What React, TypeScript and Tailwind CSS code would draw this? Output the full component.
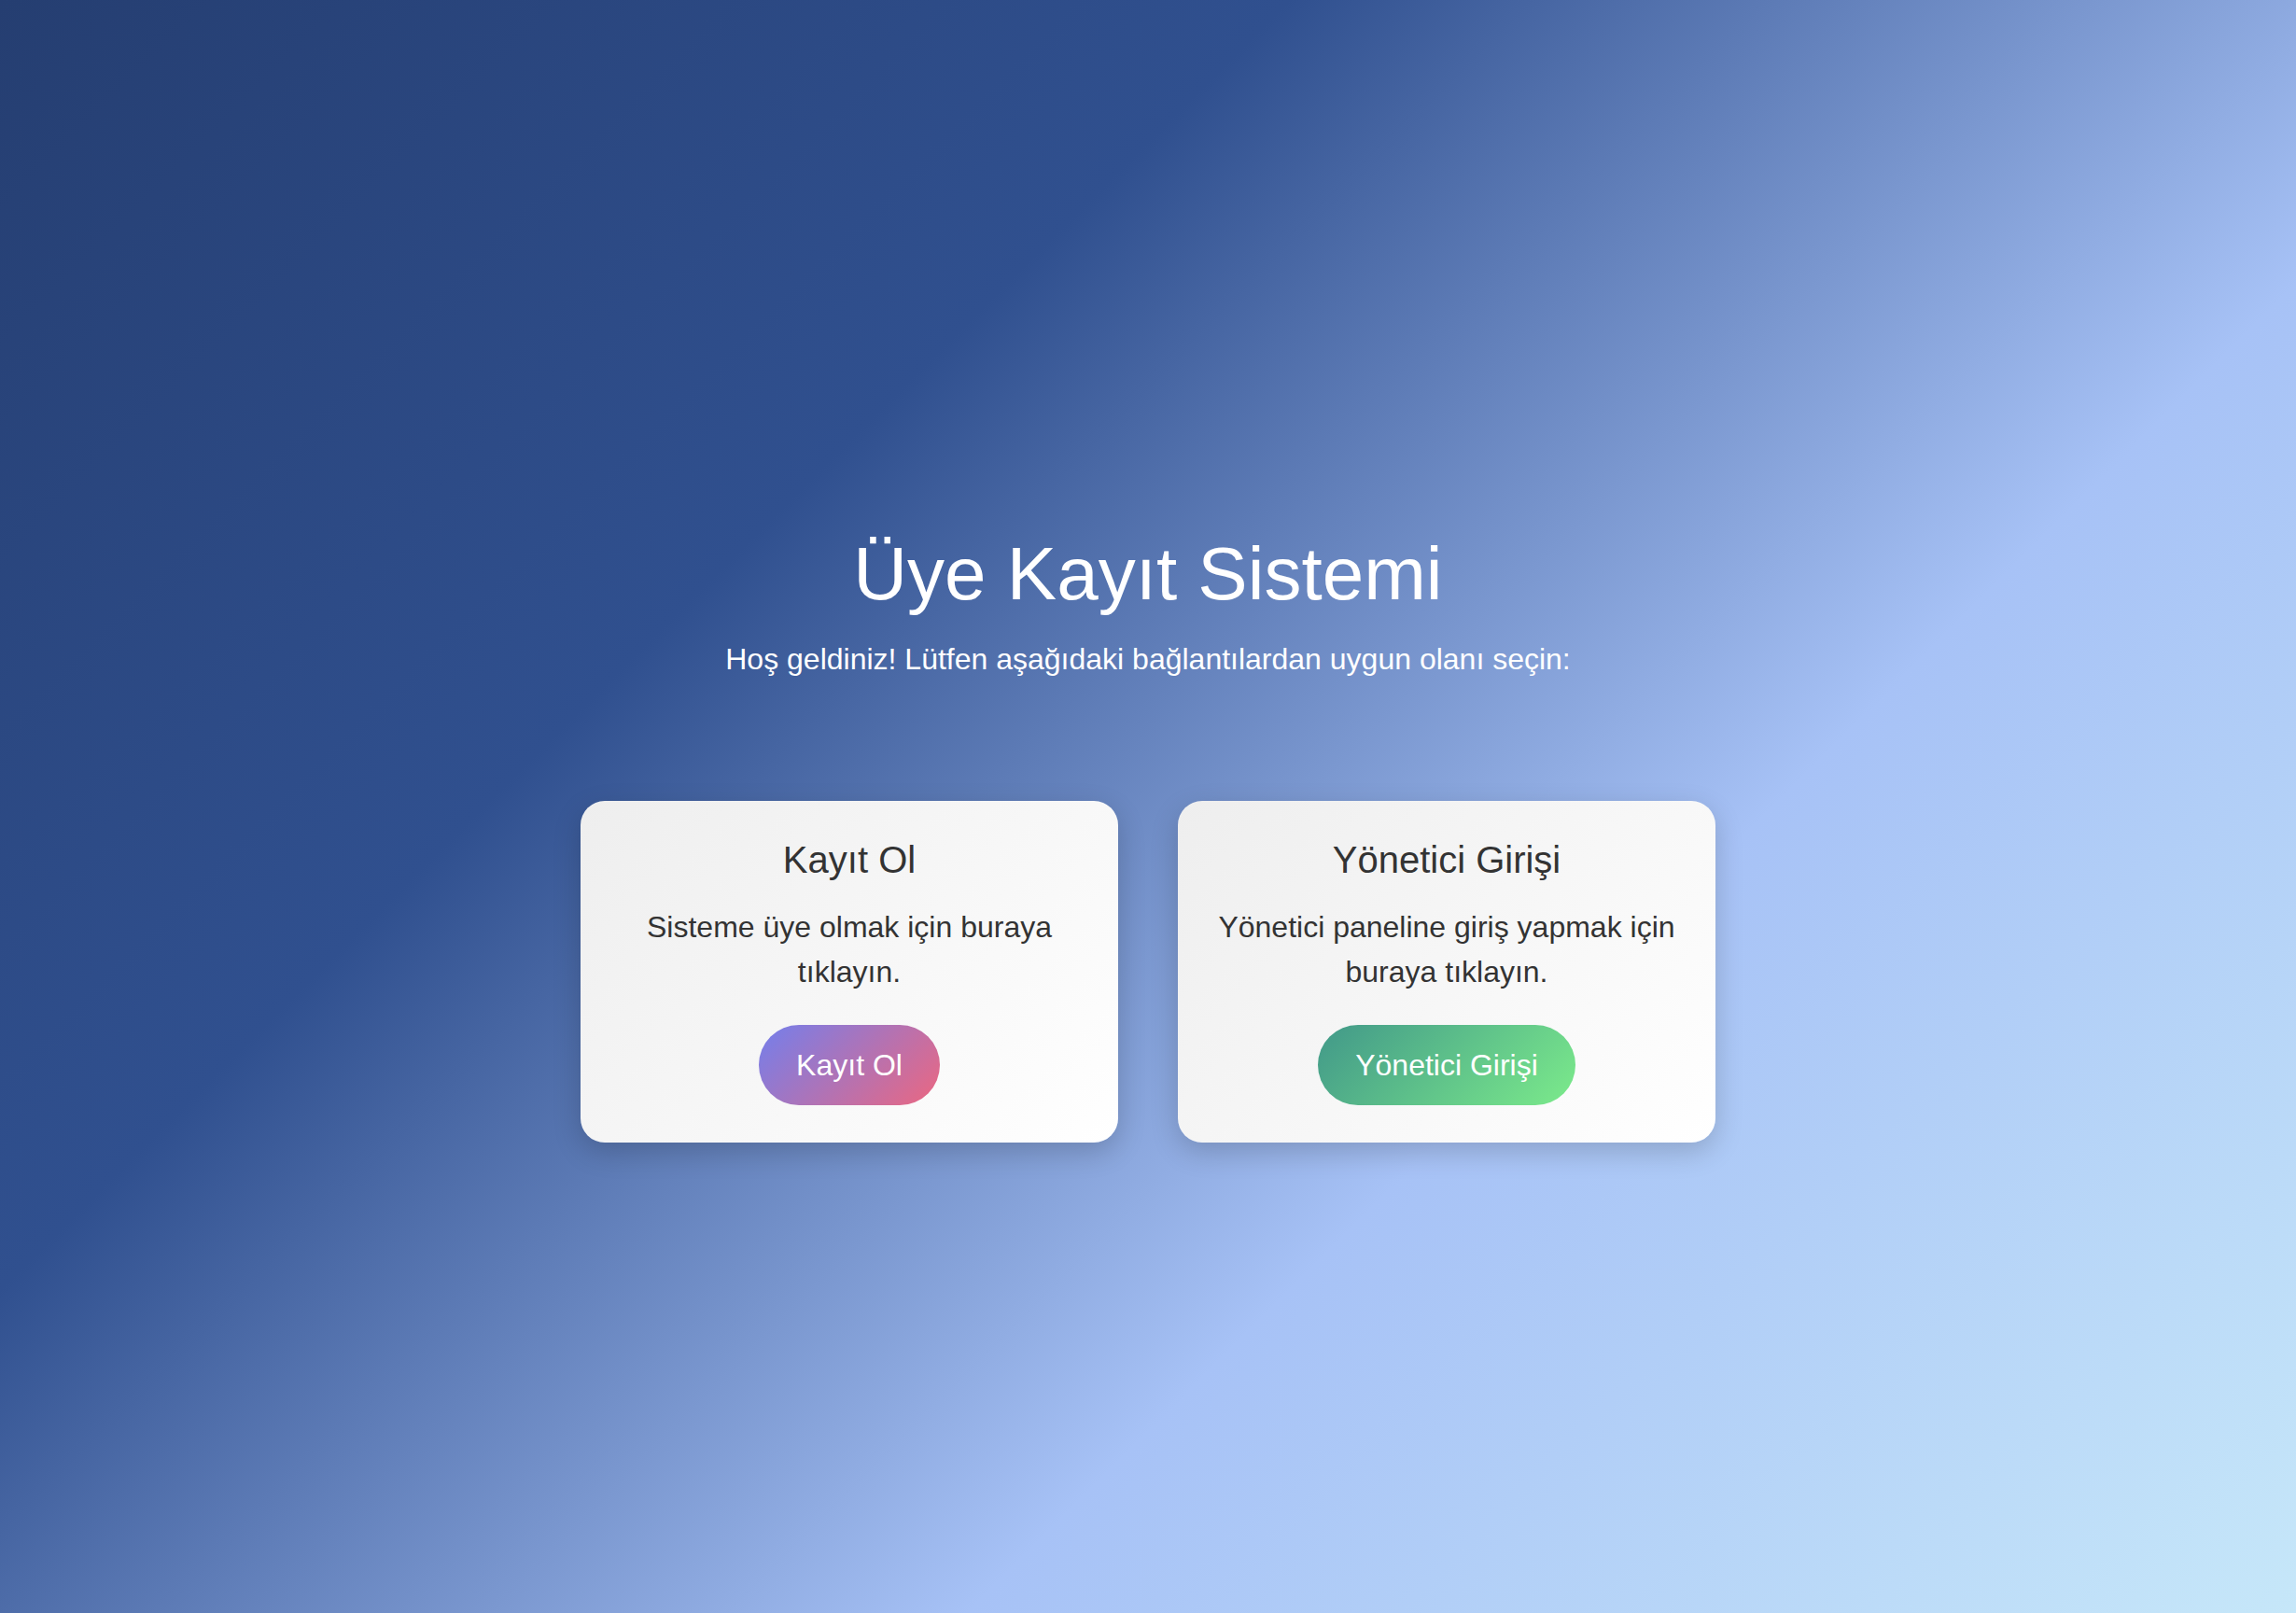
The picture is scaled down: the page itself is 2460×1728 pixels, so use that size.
export default function App() {
	return (
		<div className="min-h-screen w-full flex flex-col items-center pt-[569px] bg-[linear-gradient(135deg,#253e71_0%,#30508f_33%,#a7c2f6_66%,#c6e7f9_100%)] font-['Liberation_Sans',Arial,sans-serif]">
			{/* Heading */}
			<h1 className="text-[80px] leading-[92px] font-normal text-white">Üye Kayıt Sistemi</h1>
			<p className="mt-[27px] text-[32px] leading-[37px] text-white">
				Hoş geldiniz! Lütfen aşağıdaki bağlantılardan uygun olanı seçin:
			</p>

			{/* Link cards */}
			<div className="mt-[133px] flex gap-[64px]">
				<div className="w-[576px] p-[40px] rounded-[26px] text-center text-[#333333] bg-[linear-gradient(135deg,#eeeeee,#ffffff)] shadow-[0_10px_30px_rgba(0,0,0,0.18)]">
					<h3 className="text-[40px] leading-[46px] font-normal">Kayıt Ol</h3>
					<p className="mt-[25px] text-[32px] leading-[48px]">Sisteme üye olmak için buraya tıklayın.</p>
					<a
						href="#"
						className="mt-[33px] inline-block rounded-full px-[40px] py-[24px] text-[32px] leading-[38px] text-white bg-[linear-gradient(135deg,#737fec,#ec6780)]"
					>
						Kayıt Ol
					</a>
				</div>

				<div className="w-[576px] p-[40px] rounded-[26px] text-center text-[#333333] bg-[linear-gradient(135deg,#eeeeee,#ffffff)] shadow-[0_10px_30px_rgba(0,0,0,0.18)]">
					<h3 className="text-[40px] leading-[46px] font-normal">Yönetici Girişi</h3>
					<p className="mt-[25px] text-[32px] leading-[48px]">Yönetici paneline giriş yapmak için buraya tıklayın.</p>
					<a
						href="#"
						className="mt-[33px] inline-block rounded-full px-[40px] py-[24px] text-[32px] leading-[38px] text-white bg-[linear-gradient(135deg,#419889,#7ceb8b)]"
					>
						Yönetici Girişi
					</a>
				</div>
			</div>
		</div>
	);
}
